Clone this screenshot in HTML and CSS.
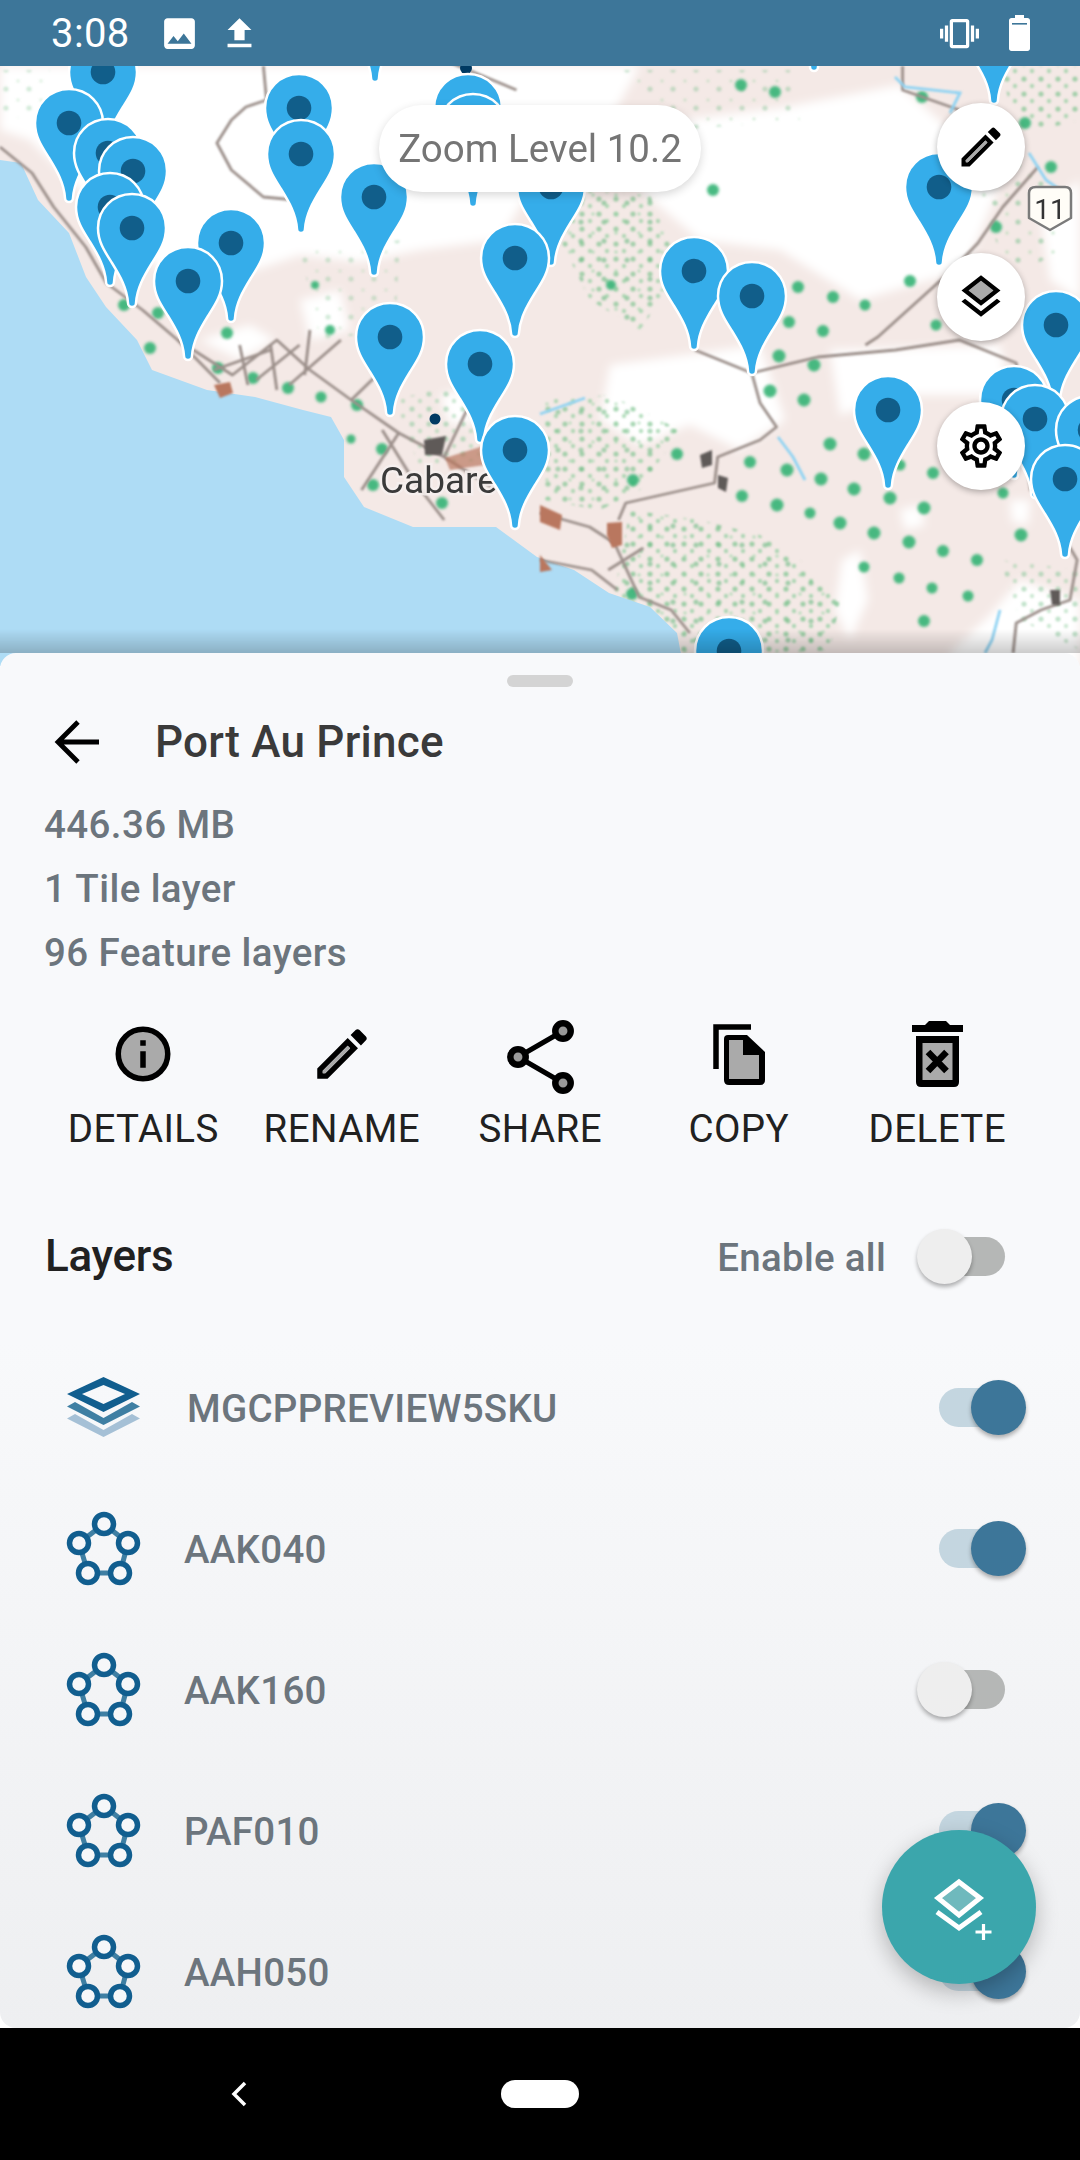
FILE: index.html
```html
<!DOCTYPE html>
<html lang="en">
<head>
<meta charset="utf-8">
<title>Port Au Prince</title>
<link rel="stylesheet" href="styles.css">
</head>
<body>
<div class="phone">
  <header class="status">
    <span class="time">3:08</span>
    <svg class="st-img" viewBox="0 0 24 24"><path fill="#fff" d="M21 19V5c0-1.1-.9-2-2-2H5c-1.1 0-2 .9-2 2v14c0 1.1.9 2 2 2h14c1.1 0 2-.9 2-2zM8.5 13.5l2.5 3.01L14.5 12l4.5 6H5l3.5-4.5z"/></svg>
    <svg class="st-up" viewBox="0 0 24 24"><path fill="#fff" d="M9 16h6v-6h4l-7-7-7 7h4zm-4 2h14v2H5z"/></svg>
    <span class="grow"></span>
    <svg class="st-vib" viewBox="0 0 24 24"><path fill="#fff" d="M0 15h2V9H0v6zm3 2h2V7H3v10zm19-8v6h2V9h-2zm-3 8h2V7h-2v10zM16.5 3h-9C6.67 3 6 3.67 6 4.5v15c0 .83.67 1.5 1.5 1.5h9c.83 0 1.5-.67 1.5-1.5v-15c0-.83-.67-1.5-1.5-1.5zM16 19H8V5h8v14z"/></svg>
    <svg class="st-bat" viewBox="0 0 21 36"><path fill="#fff" d="M6 0h9v3h3.5c1.4 0 2.500 1 2.500 2.500V33.500c0 1.400-1.100 2.500-2.500 2.500h-16C1.100 36 0 34.900 0 33.500V5.500C0 4 1.100 3 2.500 3H6z"/><rect x="3" y="8" width="15" height="1.600" fill="#3d7699"/></svg>
  </header>

  <section class="map">
    <svg class="map-art" viewBox="0 66 1080 600" width="1080" height="600">
      <defs>
        <filter id="soft" x="-5%" y="-5%" width="110%" height="110%"><feGaussianBlur stdDeviation="5"/></filter>
        <filter id="soft1" x="-5%" y="-5%" width="110%" height="110%"><feGaussianBlur stdDeviation="1.800"/></filter>
        <filter id="soft2" x="-5%" y="-5%" width="110%" height="110%"><feGaussianBlur stdDeviation="0.900"/></filter>
        <pattern id="scrub" width="17" height="15" patternUnits="userSpaceOnUse">
          <circle cx="4" cy="4" r="2.600" fill="#79c28c"/>
          <circle cx="12" cy="11" r="2.200" fill="#8fce9d"/>
        </pattern>
        <pattern id="scrub2" width="23" height="19" patternUnits="userSpaceOnUse">
          <circle cx="6" cy="13" r="2.600" fill="#6dbb83"/>
          <circle cx="18" cy="5" r="1.800" fill="#9ad4a6"/>
        </pattern>
        <g id="pin">
          <path d="M0-34C19-34 34-19 34 0 34 14 27 24 20 35 12 48 5 60 4 75A4 4 0 0 1-4 75C-5 60-12 48-20 35-27 24-34 14-34 0-34-19-19-34 0-34Z" fill="#35adea" stroke="#fff" stroke-width="2.500"/>
          <circle r="12.300" fill="#115e8a"/>
        </g>
      </defs>
      <rect x="0" y="66" width="1080" height="600" fill="#f4e9e6"/>
      <g fill="#fff" filter="url(#soft)">
        <path d="M0 66H640L610 120 590 190 530 190 500 240 420 250 360 262 300 255 240 275 170 280 90 200 30 140 0 130Z"/>
        <path d="M640 125 780 108 900 85 950 130 1000 185 965 270 860 300 780 250 700 240 640 190Z"/>
        <path d="M610 365 760 345 785 420 740 450 690 425 640 445 600 420Z"/>
        <path d="M830 350 1000 345 1010 395 900 395 840 415Z"/>
        <path d="M950 653 990 615 1020 580 1080 600V670H950Z"/>
        <path d="M842 560 860 550 868 600 850 640 835 610Z"/>
        <path d="M1040 210 1080 180V300L1050 280Z"/>
        <path d="M200 340 250 325 275 340 240 360Z"/>
        <path d="M300 300 340 290 350 330 310 340Z"/>
        <path d="M440 395 485 385 490 420 450 425Z"/>
        <path d="M900 510 920 505 925 525 905 530Z"/>
        <path d="M1010 500 1030 500 1028 525 1012 522Z"/>
      </g>
      <g filter="url(#soft2)">
        <path fill="url(#scrub)" opacity=".65" d="M575 190 650 195 680 270 640 330 590 300 560 240Z"/>
        <path fill="url(#scrub2)" opacity=".6" d="M575 190 650 195 680 270 640 330 590 300 560 240Z"/>
        <path fill="url(#scrub)" opacity=".65" d="M545 400 610 395 680 430 640 490 600 510 545 500Z"/>
        <path fill="url(#scrub2)" opacity=".55" d="M545 400 610 395 680 430 640 490 600 510 545 500Z"/>
        <path fill="url(#scrub)" opacity=".7" d="M630 510 700 520 760 535 800 560 840 600 830 650 680 660 615 590Z"/>
        <path fill="url(#scrub2)" opacity=".6" d="M630 510 700 520 760 535 800 560 840 600 830 650 680 660 615 590Z"/>
        <path fill="url(#scrub)" opacity=".65" d="M1000 66H1080V120L1040 130 1010 105Z"/>
        <path fill="url(#scrub)" opacity=".45" d="M395 400 470 380 480 460 420 470Z"/>
        <path fill="url(#scrub)" opacity=".45" d="M1000 560 1080 570V650L1020 620Z"/>
        <path fill="url(#scrub2)" opacity=".45" d="M960 140 1040 170 1060 250 1010 280Z"/>
        <path fill="url(#scrub2)" opacity=".3" d="M0 70 50 70 40 115 0 120Z"/>
        <path fill="url(#scrub2)" opacity=".35" d="M610 70 790 70 800 120 680 130Z"/>
        <path fill="url(#scrub2)" opacity=".3" d="M300 250 400 240 395 330 320 340Z"/>
      </g>
      <g fill="#35b374" filter="url(#soft1)" opacity=".9">
        <circle cx="779" cy="356" r="6.500"/><circle cx="814" cy="365" r="6.500"/><circle cx="770" cy="391" r="6.500"/><circle cx="804" cy="400" r="6.500"/><circle cx="830" cy="444" r="6.500"/><circle cx="864" cy="454" r="6.500"/><circle cx="787" cy="470" r="6.500"/><circle cx="821" cy="479" r="6.500"/><circle cx="854" cy="489" r="6.500"/><circle cx="890" cy="498" r="6.500"/><circle cx="924" cy="508" r="6.500"/><circle cx="777" cy="505" r="6.500"/><circle cx="840" cy="523" r="6.500"/><circle cx="874" cy="533" r="6.500"/><circle cx="909" cy="542" r="6.500"/><circle cx="943" cy="551" r="6"/><circle cx="977" cy="560" r="6"/><circle cx="1021" cy="535" r="6.500"/><circle cx="742" cy="496" r="6"/><circle cx="750" cy="462" r="6"/><circle cx="677" cy="454" r="6"/><circle cx="633" cy="480" r="6"/><circle cx="810" cy="513" r="5.500"/><circle cx="933" cy="473" r="6"/><circle cx="900" cy="465" r="5.500"/><circle cx="968" cy="596" r="5.500"/><circle cx="932" cy="588" r="5.500"/><circle cx="899" cy="578" r="5.500"/><circle cx="864" cy="567" r="5.500"/><circle cx="924" cy="621" r="6"/><circle cx="1003" cy="493" r="5.500"/><circle cx="632" cy="594" r="6"/>
        <circle cx="741" cy="85" r="6"/><circle cx="775" cy="92" r="6"/><circle cx="922" cy="97" r="6"/><circle cx="1025" cy="123" r="6"/><circle cx="1051" cy="167" r="6"/><circle cx="713" cy="190" r="6"/><circle cx="798" cy="287" r="6"/><circle cx="833" cy="297" r="6"/><circle cx="865" cy="305" r="5.500"/><circle cx="910" cy="281" r="6"/><circle cx="789" cy="322" r="6"/><circle cx="823" cy="331" r="6"/><circle cx="936" cy="325" r="5.500"/><circle cx="996" cy="227" r="6"/><circle cx="611" cy="285" r="5"/>
        <circle cx="124" cy="305" r="6"/><circle cx="158" cy="313" r="6"/><circle cx="227" cy="333" r="6"/><circle cx="150" cy="348" r="6"/><circle cx="218" cy="368" r="6"/><circle cx="253" cy="378" r="6"/><circle cx="288" cy="388" r="6"/><circle cx="321" cy="397" r="5.500"/><circle cx="357" cy="405" r="6"/><circle cx="382" cy="449" r="6"/><circle cx="351" cy="439" r="4.500"/><circle cx="373" cy="485" r="6"/><circle cx="442" cy="503" r="6"/><circle cx="315" cy="285" r="4"/><circle cx="330" cy="330" r="5"/>
      </g>
      <path d="M0 160 21 163 38 200 69 233 86 277 106 307 137 340 152 370 207 390 255 397 303 410 331 417 344 440 344 477 364 507 413 527 496 527 537 557 574 570 609 593 650 607 677 633 684 670H0Z" fill="#aedcf5"/>
      <g fill="none" stroke="#9c908b" stroke-width="2.800" stroke-linejoin="round" filter="url(#soft2)">
        <g transform="scale(1.033 1)">
          <path d="M255 66 258 100 238 107 224 120 210 143 224 170 255 197 286 200"/>
          <path d="M0 147 31 173 52 207 83 247 103 283 138 310 172 340 213 383"/>
          <path d="M172 340 225 375 268 340 300 370 340 400 386 433 430 457 480 490"/>
          <path d="M207 370 262 350M248 380 290 345M280 385 330 340M340 400 375 365M370 430 400 480 430 520M386 433 350 490M430 457 452 410M232 345 240 385M262 345 268 390M300 330 295 375"/>
          <path d="M430 60 500 90"/>
        </g>
        <g transform="translate(540 0) scale(1.033 1) translate(-540 0)">
          <path d="M891 66V90L946 110"/>
          <path d="M1022 167 988 207 964 243 939 270 867 337 855 345"/>
          <path d="M690 350 745 373 809 357 884 350 946 340 1001 363 1015 490 1036 503 1039 523 1060 560 1053 600 1025 610 1001 623 998 653"/>
          <path d="M745 373 753 403 769 427 753 440 712 457 709 483 623 503 616 520"/>
          <path d="M540 513 588 527 612 543 636 597 667 610 685 633"/>
          <path d="M540 560 590 570 615 590M606 570 640 548"/>
        </g>
      </g>
      <g fill="#b9775f" filter="url(#soft2)">
        <path d="M540 505 562 515 560 530 540 522Z"/>
        <path d="M607 523 622 522 622 545 612 548 607 535Z"/>
        <path d="M214 385 230 382 233 393 220 398Z"/>
        <path d="M445 458 496 442 485 465 450 470Z" opacity=".7"/>
        <path d="M540 555 552 570 540 572Z"/>
      </g>
      <g fill="#5f5a58" filter="url(#soft2)">
        <path d="M700 455 712 450 712 465 702 468ZM718 475 728 478 726 492 718 488Z"/>
        <path d="M424 440 446 436 442 455 425 455Z"/>
        <path d="M1050 590 1060 590 1060 605 1052 605Z"/>
      </g>
      <g fill="none" stroke="#8fd3f3" stroke-width="2.800" filter="url(#soft2)">
        <path d="M895 77 905 87 960 93 950 113"/>
        <path d="M1029 153 1046 180 1070 197"/>
        <path d="M778 437 793 457 805 480"/>
        <path d="M540 414 585 398"/>
        <path d="M1000 610 992 640 985 653"/>
      </g>
      <text class="map-label" x="380" y="493">Cabares</text>
      <g>
        <circle cx="466" cy="68" r="6" fill="#003a63"/>
        <circle cx="435" cy="419" r="5.500" fill="#003a63"/>
        <use href="#pin" x="375" y="3"/>
        <use href="#pin" x="814" y="-8"/>
        <use href="#pin" x="103" y="72"/>
        <use href="#pin" x="69" y="123"/>
        <use href="#pin" x="108" y="153"/>
        <use href="#pin" x="133" y="171"/>
        <use href="#pin" x="110" y="207"/>
        <use href="#pin" x="132" y="228"/>
        <use href="#pin" x="231" y="243"/>
        <use href="#pin" x="188" y="281"/>
        <use href="#pin" x="299" y="108"/>
        <use href="#pin" x="301" y="154"/>
        <use href="#pin" x="468" y="108"/>
        <use href="#pin" x="473" y="128"/>
        <use href="#pin" x="551" y="187"/>
        <use href="#pin" x="374" y="197"/>
        <use href="#pin" x="515" y="258"/>
        <use href="#pin" x="390" y="337"/>
        <use href="#pin" x="480" y="364"/>
        <use href="#pin" x="515" y="450"/>
        <use href="#pin" x="694" y="271"/>
        <use href="#pin" x="752" y="296"/>
        <use href="#pin" x="994" y="25"/>
        <use href="#pin" x="939" y="187"/>
        <use href="#pin" x="888" y="410"/>
        <use href="#pin" x="729" y="651"/>
        <use href="#pin" x="1056" y="325"/>
        <use href="#pin" x="1014" y="400"/>
        <use href="#pin" x="1035" y="419"/>
        <use href="#pin" x="1090" y="430"/>
        <use href="#pin" x="1065" y="479"/>
      </g>
      <path d="M1036 187H1065Q1071 187 1071 193V218L1050 230 1029 218V193Q1029 187 1036 187Z" fill="#fffdf7" stroke="#7b7b7b" stroke-width="2.500" stroke-linejoin="round"/>
      <text class="map-shield" x="1050" y="219">11</text>
    </svg>
    <div class="zoom-pill">Zoom Level 10.2</div>
    <button class="map-btn btn-edit"><svg class="ico-52" viewBox="0 0 24 24"><path d="M3 17.250V21h3.750L17.810 9.940l-3.750-3.750L3 17.250zM5.920 19H5v-.92l9.060-9.060.92.92L5.920 19zM20.710 5.630l-2.340-2.340c-.39-.39-1.020-.39-1.410 0l-1.830 1.830 3.750 3.750 1.830-1.830c.39-.39.39-1.020 0-1.410z"/><path fill="#aaa" d="M5 18.080V19h.92l9.060-9.060-.92-.92z"/></svg></button>
    <button class="map-btn btn-layers"><svg class="ico-52" viewBox="0 0 24 24"><path fill="#aaa" d="M12 4.530 6.260 9 12 13.470 17.740 9z"/><path d="M11.990 18.540l-7.370-5.730L3 14.070l9 7 9-7-1.630-1.270zM12 16l7.360-5.730L21 9l-9-7-9 7 1.630 1.270L12 16zm0-11.470L17.740 9 12 13.470 6.260 9 12 4.530z"/></svg></button>
    <button class="map-btn btn-gear"><svg class="ico-52" viewBox="0 0 24 24"><path d="M19.430 12.980c.04-.32.07-.64.07-.98 0-.34-.03-.66-.07-.98l2.110-1.650c.19-.15.24-.42.12-.64l-2-3.460c-.09-.16-.26-.25-.44-.25-.06 0-.12.01-.17.03l-2.490 1c-.52-.4-1.080-.73-1.690-.98l-.38-2.650C14.460 2.180 14.250 2 14 2h-4c-.25 0-.46.18-.49.42l-.38 2.650c-.61.25-1.170.59-1.690.98l-2.490-1c-.06-.02-.12-.03-.18-.03-.17 0-.34.09-.43.25l-2 3.460c-.13.22-.07.49.12.64l2.110 1.650c-.04.32-.07.65-.07.98 0 .33.03.66.07.98l-2.110 1.650c-.19.15-.24.42-.12.64l2 3.460c.09.16.26.25.44.25.06 0 .12-.01.17-.03l2.490-1c.52.4 1.080.73 1.690.98l.38 2.650c.03.24.24.42.49.42h4c.25 0 .46-.18.49-.42l.38-2.650c.61-.25 1.170-.59 1.690-.98l2.490 1c.06.02.12.03.18.03.17 0 .34-.09.43-.25l2-3.460c.12-.22.07-.49-.12-.64l-2.110-1.650zm-1.980-1.710c.04.31.05.52.05.73 0 .21-.02.43-.05.73l-.14 1.130.89.7 1.080.84-.7 1.210-1.270-.51-1.040-.42-.9.68c-.43.32-.84.56-1.250.73l-1.060.43-.16 1.130-.2 1.350h-1.400l-.19-1.350-.16-1.130-1.060-.43c-.43-.18-.83-.41-1.230-.71l-.91-.7-1.060.43-1.270.51-.7-1.210 1.080-.84.89-.7-.14-1.130c-.03-.31-.05-.54-.05-.74s.02-.43.05-.73l.14-1.130-.89-.7-1.080-.84.7-1.210 1.270.51 1.040.42.9-.68c.43-.32.84-.56 1.250-.73l1.060-.43.16-1.130.2-1.350h1.390l.19 1.350.16 1.130 1.060.43c.43.18.83.41 1.230.71l.91.7 1.060-.43 1.270-.51.7 1.210-1.070.85-.89.7.14 1.130zM12 8c-2.210 0-4 1.790-4 4s1.790 4 4 4 4-1.790 4-4-1.790-4-4-4zm0 6c-1.100 0-2-.9-2-2s.9-2 2-2 2 .9 2 2-.9 2-2 2z"/></svg></button>
  </section>

  <section class="sheet">
    <div class="handle"></div>
    <div class="sheet-head">
      <svg class="back" viewBox="0 0 46 46"><path d="M45 23H5M24 3 4 23l20 20" fill="none" stroke="#000" stroke-width="4.800"/></svg>
      <h1 class="title">Port Au Prince</h1>
    </div>
    <div class="info">
      <div>446.36 MB</div>
      <div>1 Tile layer</div>
      <div>96 Feature layers</div>
    </div>
    <div class="actions">
      <div class="action">
        <div class="action-ico"><svg class="ico-66" viewBox="0 0 24 24"><circle cx="12" cy="12" r="9" fill="#aaa" stroke="#000" stroke-width="2"/><path d="M11 11h2v6h-2zM11 7h2v2h-2z"/></svg></div>
        <span>DETAILS</span>
      </div>
      <div class="action">
        <div class="action-ico"><svg class="ico-66" viewBox="0 0 24 24"><path d="M3 17.250V21h3.750L17.810 9.940l-3.750-3.750L3 17.250zM5.920 19H5v-.92l9.060-9.060.92.92L5.920 19zM20.710 5.630l-2.340-2.340c-.39-.39-1.020-.39-1.410 0l-1.830 1.830 3.750 3.750 1.830-1.830c.39-.39.39-1.020 0-1.410z"/><path fill="#aaa" d="M5 18.080V19h.92l9.060-9.060-.92-.92z"/></svg></div>
        <span>RENAME</span>
      </div>
      <div class="action">
        <div class="action-ico"><svg class="ico-share" viewBox="0 0 67 74"><path d="M56 11 11 37l45 26" fill="none" stroke="#000" stroke-width="5"/><g fill="#999" stroke="#000" stroke-width="6.500"><circle cx="56" cy="11" r="7.700"/><circle cx="11" cy="37" r="7.700"/><circle cx="56" cy="63" r="7.700"/></g></svg></div>
        <span>SHARE</span>
      </div>
      <div class="action">
        <div class="action-ico"><svg class="ico-copy" viewBox="0 0 52 61"><path d="M3 45V3H38" fill="none" stroke="#000" stroke-width="5.500"/><path d="M15 11H34L52 28V56Q52 61 47 61H16Q11 61 11 56V15Q11 11 15 11Z"/><path fill="#aaa" d="M16 16H30V31H46V55H16Z"/></svg></div>
        <span>COPY</span>
      </div>
      <div class="action">
        <div class="action-ico"><svg class="ico-del" viewBox="0 0 51 66"><path d="M13 4 17 0H34L38 4H51V11H0V4ZM4 15H47V61Q47 66 42 66H9Q4 66 4 61Z"/><path fill="#aaa" d="M10.500 22H40.500V59H10.500Z"/><path d="M16 31 34.500 50M34.500 31 16 50" stroke="#000" stroke-width="6.500"/></svg></div>
        <span>DELETE</span>
      </div>
    </div>
    <div class="layers-head">
      <h2 class="layers-title">Layers</h2>
      <span class="grow"></span>
      <span class="enable">Enable all</span>
      <span class="switch off"><i></i></span>
    </div>
    <ul class="rows">
      <li class="row">
        <svg class="row-ico layer-ico" viewBox="0 0 80 80"><path fill="#a5c0d6" d="M12 47 40.500 63 69 47 77 51.500 40.500 70 4 51.500Z"/><path fill="#3f7fa3" d="M12 35 40.500 51 69 35 77 39.500 40.500 58 4 39.500Z"/><path fill="#115e8f" fill-rule="evenodd" d="M40.500 10 77 27 40.500 45 4 27ZM40.500 18 19 27 40.500 37 62 27Z"/></svg>
        <span class="row-name first">MGCPPREVIEW5SKU</span>
        <span class="switch on"><i></i></span>
      </li>
      <li class="row">
        <svg class="row-ico" viewBox="0 0 80 80"><use href="#poly"/></svg>
        <span class="row-name">AAK040</span>
        <span class="switch on"><i></i></span>
      </li>
      <li class="row">
        <svg class="row-ico" viewBox="0 0 80 80"><use href="#poly"/></svg>
        <span class="row-name">AAK160</span>
        <span class="switch off"><i></i></span>
      </li>
      <li class="row">
        <svg class="row-ico" viewBox="0 0 80 80"><use href="#poly"/></svg>
        <span class="row-name">PAF010</span>
        <span class="switch on"><i></i></span>
      </li>
      <li class="row">
        <svg class="row-ico" viewBox="0 0 80 80"><use href="#poly"/></svg>
        <span class="row-name">AAH050</span>
        <span class="switch on"><i></i></span>
      </li>
    </ul>
    <button class="fab"><svg class="fab-ico" viewBox="0 0 154 154"><path d="M77 52 98 68 77 85 56 68Z" fill="#6fb9bd" stroke="#fff" stroke-width="5"/><path d="M55 82 77 98 99 82" fill="none" stroke="#fff" stroke-width="5"/><path d="M93.500 102h16M101.500 94v16" fill="none" stroke="#fff" stroke-width="3.200"/></svg></button>
  </section>

  <footer class="nav">
    <svg class="nav-back" viewBox="0 0 20 28"><path d="M16 3 5 14l11 11" fill="none" stroke="#fff" stroke-width="3.500"/></svg>
    <span class="nav-home"></span>
  </footer>
</div>
<svg class="defs" width="0" height="0"><defs>
  <g id="poly">
    <path d="M41 15 65 34 57 64H25L16 34Z" fill="none" stroke="#3f7fa3" stroke-width="5"/>
    <g fill="#f6f7f9" stroke="#115e8f" stroke-width="5.500">
      <circle cx="41" cy="15" r="9.500"/><circle cx="16" cy="34" r="9.500"/><circle cx="65" cy="34" r="9.500"/><circle cx="25" cy="64" r="9.500"/><circle cx="57" cy="64" r="9.500"/>
    </g>
  </g>
</defs></svg>
</body>
</html>
```
FILE: styles.css
```css
* { box-sizing: border-box; }
html, body { margin: 0; padding: 0; }
body { font-family: Roboto, "Liberation Sans", sans-serif; background: #fff; }
.defs { position: absolute; }
.grow { flex: 1; }

.phone { width: 1080px; height: 2160px; display: flex; flex-direction: column; overflow: hidden; position: relative; }

.status { height: 66px; flex: none; background: #3d7699; display: flex; align-items: center; padding: 0 50px 0 51px; color: #fff; position: relative; z-index: 3; }
.time { font-size: 40px; width: 108px; letter-spacing: .4px; }
.st-img { width: 41px; height: 41px; }
.st-up { width: 41px; height: 41px; margin-left: 19px; }
.st-vib { width: 39px; height: 39px; }
.st-bat { width: 21px; height: 36px; margin-left: 30px; }

.map { height: 587px; flex: none; position: relative; }
.map-art { display: block; position: absolute; left: 0; top: 0; }
.map-label { font-size: 37px; fill: #3a3a3a; stroke: #f6f0ee; stroke-width: 5px; paint-order: stroke; stroke-opacity: .85; }
.map-shield { font-size: 28px; fill: #333; text-anchor: middle; }

.zoom-pill { position: absolute; left: 379px; top: 39px; width: 322px; height: 87px; border-radius: 44px; background: #fff; color: #757575; font-size: 38.500px; display: flex; align-items: center; justify-content: center; box-shadow: 0 3px 10px rgba(0,0,0,.16); }

.map-btn { position: absolute; left: 937px; width: 88px; height: 88px; border-radius: 50%; border: 0; padding: 0; background: #fff; display: flex; align-items: center; justify-content: center; box-shadow: 0 2px 6px rgba(0,0,0,.3); }
.btn-edit { top: 37px; }
.btn-layers { top: 187px; }
.btn-gear { top: 336px; }
.ico-52 { width: 52px; height: 52px; display: block; }

.sheet { flex: 1; min-height: 0; position: relative; z-index: 2; overflow: hidden; background: linear-gradient(#f8f9fb 0%, #f8f9fb 50%, #eeeff1 100%); border-radius: 16px; padding-top: 22px; }
.map::after { content: ""; position: absolute; left: 0; right: 0; bottom: 0; height: 24px; background: linear-gradient(rgba(0,0,0,0), rgba(0,0,0,.2)); }
.handle { width: 66px; height: 12px; border-radius: 6px; background: #d4d4d4; margin: 0 auto; }
.sheet-head { height: 88px; margin-top: 10px; display: flex; align-items: center; padding-left: 54px; }
.back { width: 46px; height: 46px; display: block; margin-top: 2px; }
.title { margin: 2px 0 0 55px; font-size: 44px; font-weight: 500; color: #3a3a3a; letter-spacing: .25px; }
.info { margin-top: 8px; padding-left: 44px; font-size: 38.500px; line-height: 64px; font-weight: 500; color: #6c757d; letter-spacing: .4px; }

.actions { margin-top: 25px; padding-left: 44px; display: grid; grid-template-columns: repeat(5, 198.500px); }
.action { display: flex; flex-direction: column; align-items: center; font-size: 38.500px; line-height: 50px; color: #212121; letter-spacing: .4px; }
.action span { margin-top: 6px; white-space: nowrap; }
.action-ico { height: 88px; display: flex; align-items: center; justify-content: center; }
.ico-66 { width: 66px; height: 66px; display: block; }
.ico-share { width: 67px; height: 74px; display: block; margin-top: 6px; }
.ico-copy { width: 52px; height: 61px; display: block; }
.ico-del { width: 51px; height: 66px; display: block; }

.layers-head { margin-top: 58px; height: 88px; display: flex; align-items: center; padding: 0 75px 0 45px; }
.layers-title { margin: 0; font-size: 44px; font-weight: 500; color: #212121; letter-spacing: -.3px; }
.enable { font-size: 38.500px; font-weight: 500; color: #6c757d; margin-right: 53px; padding-top: 2px; letter-spacing: .28px; }

.switch { position: relative; display: block; width: 66px; height: 39px; border-radius: 20px; flex: none; }
.switch i { position: absolute; top: -8px; width: 55px; height: 55px; border-radius: 50%; box-shadow: 0 3px 4px rgba(0,0,0,.3); }
.switch.off { background: #b5b7b6; }
.switch.off i { left: -22px; background: #eeeeee; }
.switch.on { background: #c4d6e0; }
.switch.on i { right: -21px; background: #3d7699; }

.rows { list-style: none; margin: 37px 0 0; padding: 0; }
.row { height: 141px; display: flex; align-items: center; padding: 0 75px 0 63px; }
.row-ico { width: 80px; height: 80px; display: block; flex: none; }
.layer-ico { margin-top: -2px; }
.row-name { flex: 1; margin-left: 41px; padding-top: 2px; font-size: 38.500px; font-weight: 500; color: #6c757d; letter-spacing: .28px; }
.row-name.first { margin-left: 44px; }

.fab { position: absolute; left: 882px; top: 1177px; width: 154px; height: 154px; border-radius: 50%; border: 0; padding: 0; background: #3ba6ac; box-shadow: 0 8px 22px rgba(0,0,0,.25); }
.fab-ico { display: block; width: 154px; height: 154px; }

.nav { height: 132px; flex: none; background: #000; display: flex; align-items: center; padding-left: 229px; position: relative; z-index: 1; }
.nav-back { width: 20px; height: 28px; display: block; }
.nav-home { width: 78px; height: 28px; border-radius: 14px; background: #fff; margin-left: 252px; }
```
